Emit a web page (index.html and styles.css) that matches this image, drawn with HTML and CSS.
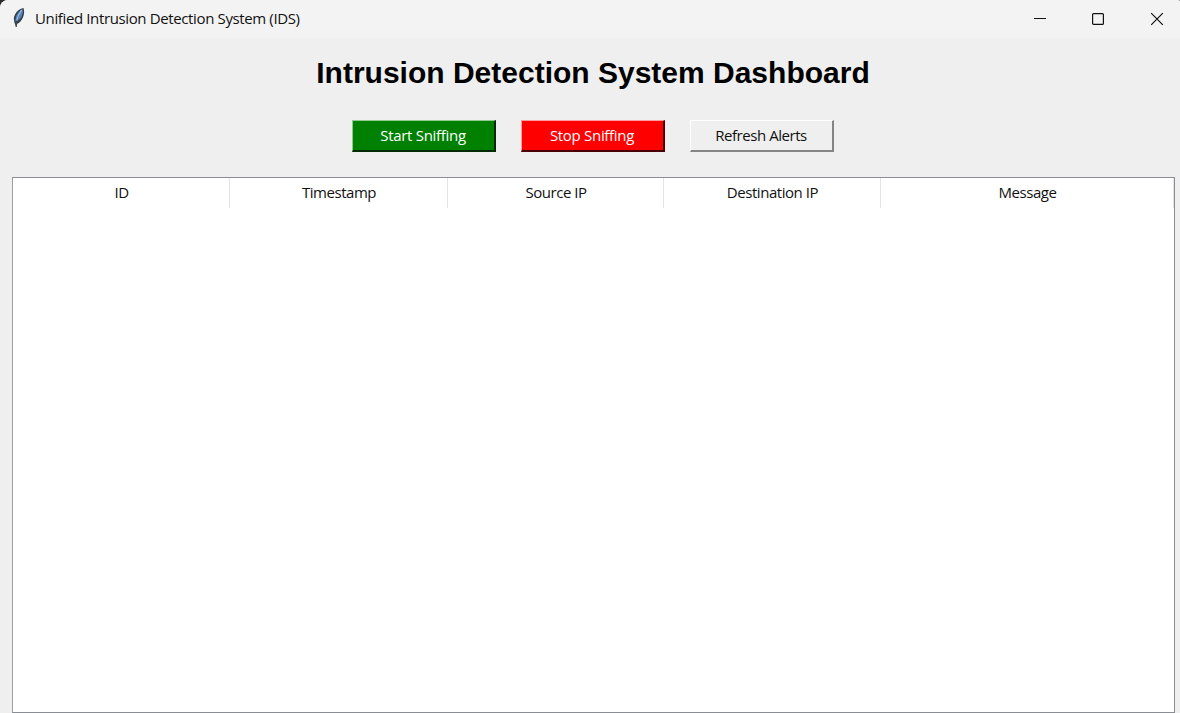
FILE: index.html
```html
<!DOCTYPE html>
<html lang="en">
<head>
<meta charset="utf-8">
<title>Unified Intrusion Detection System (IDS)</title>
<link rel="stylesheet" href="styles.css">
</head>
<body>
<div class="window">
  <header class="titlebar">
    <svg class="feather" width="14" height="22" viewBox="0 0 14 22">
      <path d="M11.500 1C6.500 1.800 2.600 6 1.800 11.500L2.400 15.500L4.200 20L5.300 16.800C10.500 14.500 13.500 7 11.500 1Z" fill="#34424f"/>
      <path d="M10.500 2C6.400 4 3.500 8.500 3.300 14.500C9 13 11.800 7 10.500 2Z" fill="#5582b8"/>
      <path d="M9.600 3.200C7.500 6 5.500 9 4.500 14" fill="none" stroke="#9dbce0" stroke-width="1.100"/>
      <path d="M4.300 13.500L4.200 20" fill="none" stroke="#4a463a" stroke-width="1.200"/>
    </svg>
    <span class="caption">Unified Intrusion Detection System (IDS)</span>
    <div class="controls">
      <svg width="14" height="14" viewBox="0 0 14 14"><path d="M1 6.500H13" stroke="#111" stroke-width="1"/></svg>
      <svg width="14" height="14" viewBox="0 0 14 14"><rect x="1.600" y="1.600" width="10.800" height="10.800" rx="1" fill="none" stroke="#111" stroke-width="1.200"/></svg>
      <svg width="14" height="14" viewBox="0 0 14 14"><path d="M1.200 1.200L12.800 12.800M12.800 1.200L1.200 12.800" stroke="#111" stroke-width="1.200"/></svg>
    </div>
  </header>
  <main class="client">
    <h1 class="heading">Intrusion Detection System Dashboard</h1>
    <div class="actions">
      <button class="btn start">Start Sniffing</button>
      <button class="btn stop">Stop Sniffing</button>
      <button class="btn refresh">Refresh Alerts</button>
    </div>
    <div class="table">
      <div class="columns">
        <div class="col"><span>ID</span></div>
        <div class="col"><span>Timestamp</span></div>
        <div class="col"><span>Source IP</span></div>
        <div class="col"><span>Destination IP</span></div>
        <div class="col"><span>Message</span></div>
      </div>
    </div>
  </main>
</div>
</body>
</html>
```
FILE: styles.css
```css
* { box-sizing: border-box; }
body { margin: 0; background: #2b2b2b; font-family: "Open Sans", "Noto Sans", sans-serif; }
.window {
  width: 1180px; height: 713px; overflow: hidden;
  display: flex; flex-direction: column;
  background: #efefef; border-radius: 8px 2px 0 0;
}
.titlebar {
  height: 38px; flex: none; display: flex; align-items: center;
  padding: 0 16px 0 12px; background: #f3f3f3;
}
.feather { margin-top: -2px; }
.caption { margin-left: 9px; padding-bottom: 2px; font-size: 15px; line-height: 20px; letter-spacing: -0.370px; color: #111; white-space: nowrap; }
.controls { margin-left: auto; display: flex; gap: 45px; }
.controls svg { display: block; }
.controls svg:first-child { margin-right: -1px; }
.client { flex: 1; display: flex; flex-direction: column; padding: 17px 5px 0 12px; }
.heading {
  margin: 0 1px 0 0; height: 36px; line-height: 36px; text-align: center;
  font-family: "Liberation Sans", Arial, sans-serif; font-size: 30px; font-weight: 700; color: #000;
  white-space: nowrap;
}
.actions { display: flex; justify-content: center; gap: 25px; margin-top: 29px; padding-right: 2px; }
.btn {
  width: 144px; height: 32px; padding: 0 0 2px;
  font-family: inherit; font-size: 15px; letter-spacing: -0.450px; white-space: nowrap;
  border-style: solid; border-radius: 0; border-width: 1px 2px 2px 1px;
}
.start, .stop { letter-spacing: -0.300px; }
.start { background: #008000; color: #fff; border-color: #8fca8f #002b00 #002b00 #8fca8f; }
.stop { background: #f00; color: #fff; border-color: #ff9c9c #4a0000 #4a0000 #ff9c9c; }
.refresh { background: #efefef; color: #111; border-color: #fff #858585 #858585 #fff; }
.table { height: 536px; margin-top: 25px; background: #fff; border: 1px solid #8a8d93; border-left-color: #9b9da1; }
.columns { display: grid; grid-template-columns: 217px 218px 216px 217px 1fr; height: 30px; }
.col {
  display: flex; align-items: center; justify-content: center; padding: 0 0 2px 1px;
  border-right: 1px solid #e3e3e3; font-size: 15px; letter-spacing: -0.450px; color: #111;
}
```
